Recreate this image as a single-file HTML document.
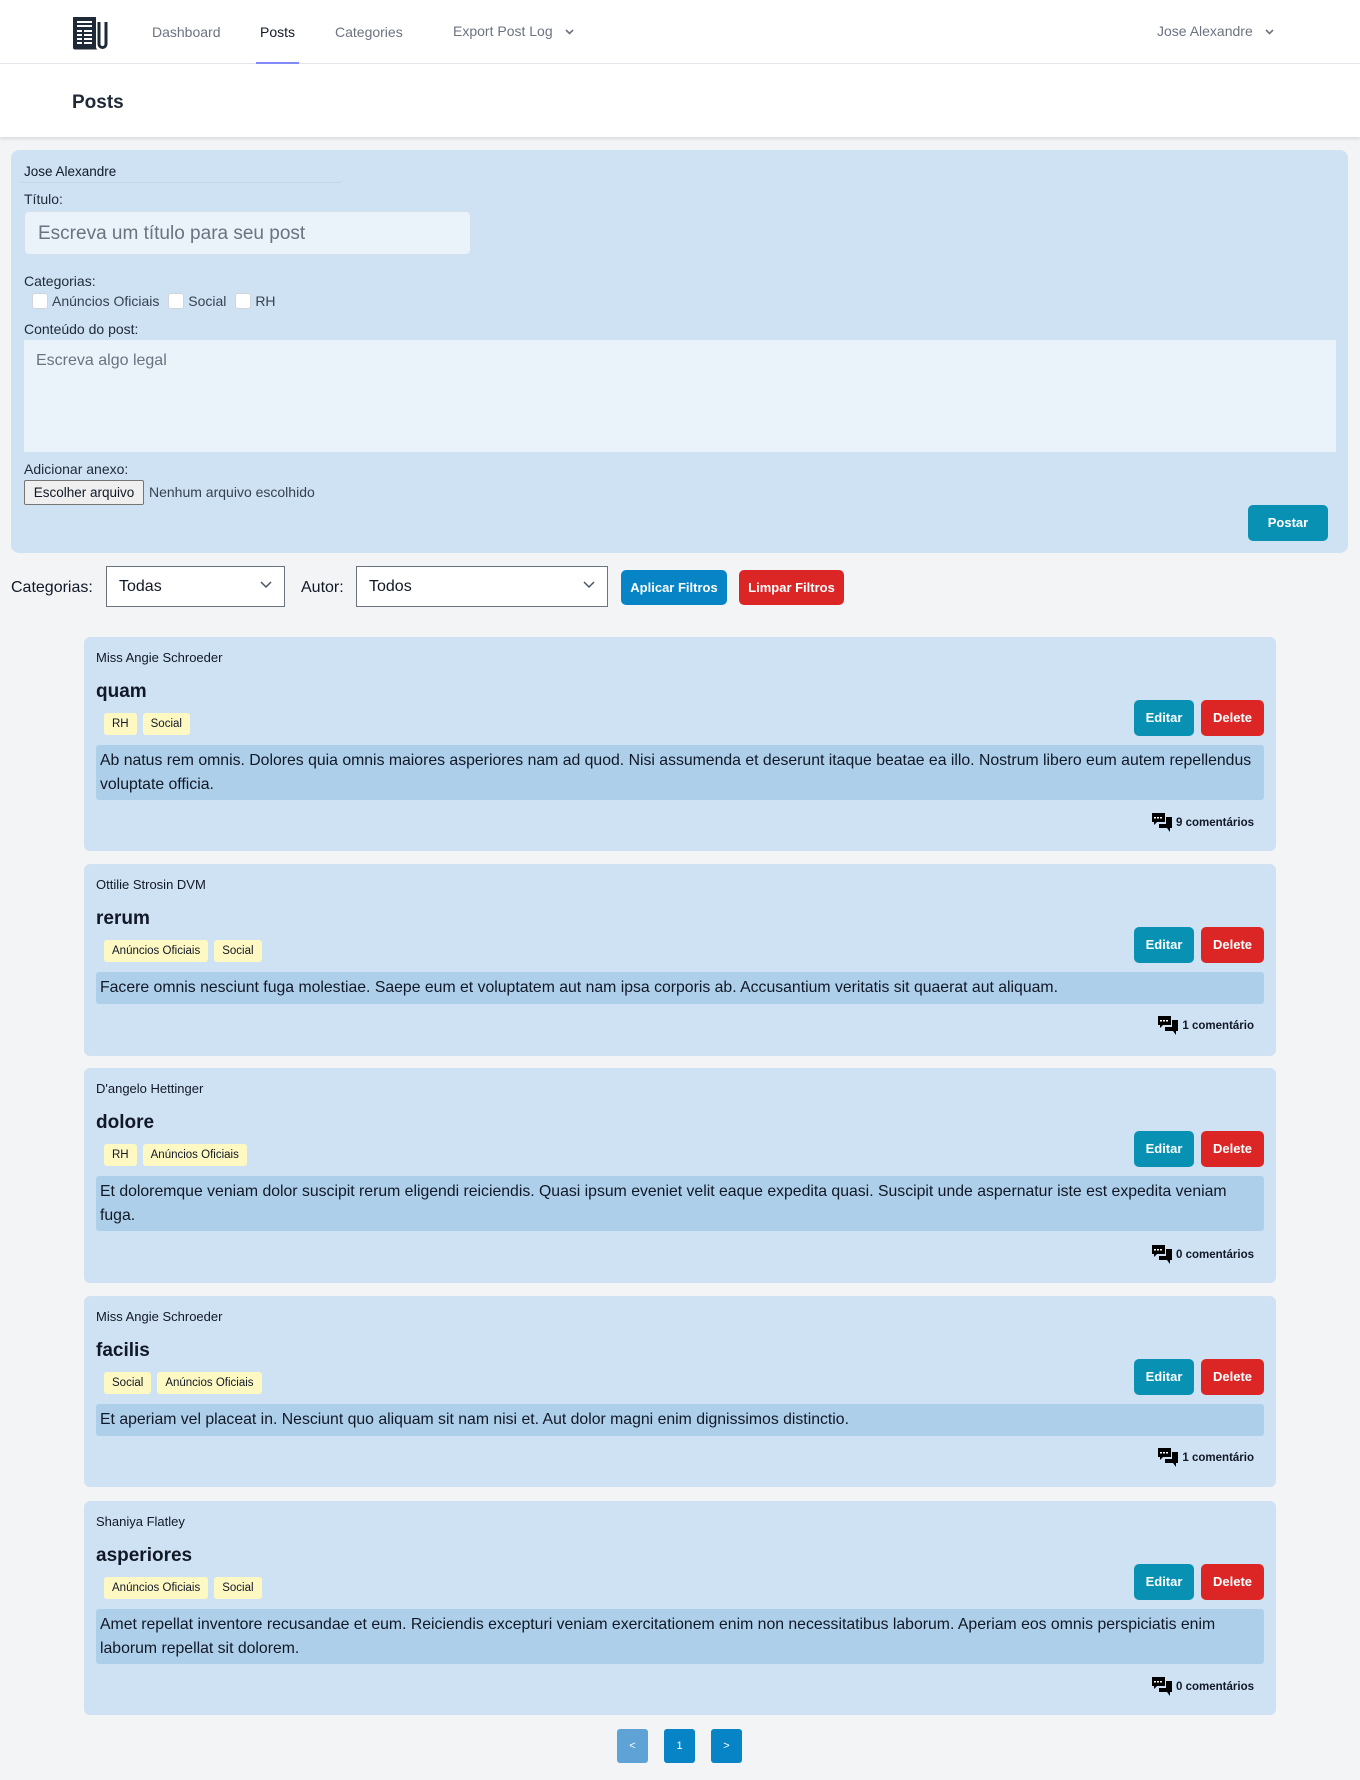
<!DOCTYPE html>
<html><head><meta charset="utf-8"><style>
*{box-sizing:border-box;margin:0;padding:0}
body{width:1360px;height:1780px;background:#f3f4f6;font-family:"Liberation Sans",sans-serif;color:#111827;position:relative;overflow:hidden}
.abs{position:absolute}
.nav{left:0;top:0;width:1360px;height:64px;background:#fff;border-bottom:1px solid #e5e7eb}
.nl{position:absolute;top:24px;font-size:14px;color:#6b7280;white-space:nowrap}
.hdr{left:0;top:64px;width:1360px;height:73px;background:#fff;box-shadow:0 2px 3px rgba(0,0,0,.1)}
.panel{left:11px;top:150px;width:1337px;height:403px;background:#cfe2f3;border-radius:8px}
.lbl{position:absolute;font-size:14px;color:#1f2937}
.cb{display:inline-block;width:16px;height:16px;background:#fff;border:1px solid #d1d5db;border-radius:3px;vertical-align:-3px;margin-right:4px}
.sel{position:absolute;height:41px;background:#fff;border:1px solid #6b7280;font-size:16px;padding:11px 12px}
.sel svg{position:absolute;right:12px;top:14px}
.btn{position:absolute;color:#fff;font-size:13px;font-weight:bold;border-radius:5px;text-align:center}
.card{position:absolute;left:84px;width:1192px;background:#cfe2f3;border-radius:6px}
.card .au{position:absolute;left:12px;top:13px;font-size:13px}
.card .ti{position:absolute;left:12px;top:44px;font-size:19px;font-weight:bold}
.card .tags{position:absolute;left:20px;top:76px}
.tag{display:inline-block;background:#fef9c3;font-size:11.5px;padding:0 8px;height:22px;line-height:22px;border-radius:3px;margin-right:6px}
.card .bd{position:absolute;left:12px;right:12px;top:108px;background:#aecfe9;border-radius:3px;padding:4px 4px;font-size:15.8px;line-height:24px}
.card .ed{left:1050px;top:63px;width:60px;height:36px;line-height:36px;background:#0891b2}
.card .de{left:1117px;top:63px;width:63px;height:36px;line-height:36px;background:#dc2626}
.card .cm{position:absolute;right:22px;font-size:11.5px;font-weight:bold;display:flex;align-items:center;gap:4px}
.pg{position:absolute;top:1729px;width:31px;height:34px;line-height:34px;color:#fff;font-size:11px;text-align:center;border-radius:3px}
</style></head><body>
<div class="abs nav">
<svg class="abs" style="left:72px;top:16px" width="38" height="34" viewBox="0 0 38 34"><path d="M1 1h23v30c0 1.5 1 2.5 2 2.5H3c-1.2 0-2-.8-2-2z" fill="#1f2937"/><path d="M27 6v22a3.5 3.5 0 0 0 7 0V6" fill="none" stroke="#1f2937" stroke-width="3"/><g fill="#fff"><rect x="5" y="5" width="15" height="2"/><rect x="5" y="9" width="15" height="2"/><rect x="5" y="14" width="5" height="2"/><rect x="12" y="14" width="8" height="2"/><rect x="5" y="18" width="5" height="2"/><rect x="12" y="18" width="8" height="2"/><rect x="5" y="22" width="5" height="2"/><rect x="12" y="22" width="8" height="2"/><rect x="5" y="26" width="5" height="2"/><rect x="12" y="26" width="8" height="2"/></g></svg>
<span class="nl" style="left:152px">Dashboard</span>
<span class="nl" style="left:260px;color:#111827">Posts</span>
<div class="abs" style="left:256px;top:62px;width:43px;height:2px;background:#818cf8"></div>
<span class="nl" style="left:335px">Categories</span>
<span class="nl" style="left:453px;top:23px">Export Post Log</span>
<svg class="abs" style="left:565px;top:29px" width="9" height="6" viewBox="0 0 9 6"><path d="M1 1l3.5 3.5L8 1" fill="none" stroke="#6b7280" stroke-width="1.6"/></svg>
<span class="nl" style="left:1157px;top:23px">Jose Alexandre</span>
<svg class="abs" style="left:1265px;top:29px" width="9" height="6" viewBox="0 0 9 6"><path d="M1 1l3.5 3.5L8 1" fill="none" stroke="#6b7280" stroke-width="1.6"/></svg>
</div>
<div class="abs hdr"><div class="abs" style="left:72px;top:28px;font-size:19px;font-weight:bold;color:#1f2937">Posts</div></div>

<div class="abs panel">
<div class="abs" style="left:8px;top:10px;width:324px;height:23px;border-bottom:1px solid #c2d6e8;border-radius:4px;font-size:13.5px;padding-left:5px;padding-top:4px">Jose Alexandre</div>
<div class="lbl" style="left:13px;top:41px">Título:</div>
<div class="abs" style="left:13px;top:61px;width:447px;height:44px;background:#eaf2fa;border:1px solid #d4e0ec;border-radius:5px;font-size:19px;color:#6b7280;padding:11px 13px">Escreva um título para seu post</div>
<div class="lbl" style="left:13px;top:123px">Categorias:</div>
<div class="lbl" style="left:21px;top:143px;color:#374151"><span class="cb"></span>Anúncios Oficiais <span class="cb" style="margin-left:5px"></span>Social <span class="cb" style="margin-left:5px"></span>RH</div>
<div class="lbl" style="left:13px;top:171px">Conteúdo do post:</div>
<div class="abs" style="left:13px;top:190px;width:1312px;height:112px;background:#eaf2fa;font-size:16px;color:#6b7280;padding:12px 12px">Escreva algo legal</div>
<div class="lbl" style="left:13px;top:311px">Adicionar anexo:</div>
<div class="abs" style="left:13px;top:330px;width:120px;height:25px;background:#efefef;border:1px solid #767676;border-radius:2px;font-size:13.5px;text-align:center;line-height:23px">Escolher arquivo</div>
<div class="lbl" style="left:138px;top:334px;color:#374151">Nenhum arquivo escolhido</div>
<div class="btn" style="left:1237px;top:355px;width:80px;height:36px;line-height:36px;background:#0891b2">Postar</div>
</div>

<div class="abs" style="left:11px;top:579px;font-size:16px">Categorias:</div>
<div class="sel" style="left:106px;top:566px;width:179px">Todas<svg width="12" height="8" viewBox="0 0 12 8"><path d="M1 1l5 5 5-5" fill="none" stroke="#4b5563" stroke-width="1.5"/></svg></div>
<div class="abs" style="left:301px;top:579px;font-size:16px">Autor:</div>
<div class="sel" style="left:356px;top:566px;width:252px">Todos<svg width="12" height="8" viewBox="0 0 12 8"><path d="M1 1l5 5 5-5" fill="none" stroke="#4b5563" stroke-width="1.5"/></svg></div>
<div class="btn" style="left:621px;top:570px;width:106px;height:35px;line-height:35px;background:#0784c6">Aplicar Filtros</div>
<div class="btn" style="left:739px;top:570px;width:105px;height:35px;line-height:35px;background:#dc2626">Limpar Filtros</div>

<div class="card" style="top:637px;height:214px">
<div class="au">Miss Angie Schroeder</div><div class="ti">quam</div>
<div class="tags"><span class="tag">RH</span><span class="tag">Social</span></div>
<div class="btn ed">Editar</div><div class="btn de">Delete</div>
<div class="bd" style="height:55px">Ab natus rem omnis. Dolores quia omnis maiores asperiores nam ad quod. Nisi assumenda et deserunt itaque beatae ea illo. Nostrum libero eum autem repellendus voluptate officia.</div>
<div class="cm" style="top:176px"><svg width="20" height="20" viewBox="0 0 20 20"><path d="M0 0h13v9H5l-3 3V9H0z" fill="#000"/><path d="M14 4h6v11h-2v4l-3-4H7v-4h7z" fill="#000"/><g fill="#fff"><rect x="2" y="4" width="2" height="1.5"/><rect x="5" y="4" width="2" height="1.5"/><rect x="8" y="4" width="2" height="1.5"/></g></svg>9 comentários</div>
</div>

<div class="card" style="top:864px;height:192px">
<div class="au">Ottilie Strosin DVM</div><div class="ti">rerum</div>
<div class="tags"><span class="tag">Anúncios Oficiais</span><span class="tag">Social</span></div>
<div class="btn ed">Editar</div><div class="btn de">Delete</div>
<div class="bd" style="height:32px">Facere omnis nesciunt fuga molestiae. Saepe eum et voluptatem aut nam ipsa corporis ab. Accusantium veritatis sit quaerat aut aliquam.</div>
<div class="cm" style="top:152px"><svg width="20" height="20" viewBox="0 0 20 20"><path d="M0 0h13v9H5l-3 3V9H0z" fill="#000"/><path d="M14 4h6v11h-2v4l-3-4H7v-4h7z" fill="#000"/><g fill="#fff"><rect x="2" y="4" width="2" height="1.5"/><rect x="5" y="4" width="2" height="1.5"/><rect x="8" y="4" width="2" height="1.5"/></g></svg>1 comentário</div>
</div>

<div class="card" style="top:1068px;height:215px">
<div class="au">D'angelo Hettinger</div><div class="ti">dolore</div>
<div class="tags"><span class="tag">RH</span><span class="tag">Anúncios Oficiais</span></div>
<div class="btn ed">Editar</div><div class="btn de">Delete</div>
<div class="bd" style="height:55px">Et doloremque veniam dolor suscipit rerum eligendi reiciendis. Quasi ipsum eveniet velit eaque expedita quasi. Suscipit unde aspernatur iste est expedita veniam fuga.</div>
<div class="cm" style="top:177px"><svg width="20" height="20" viewBox="0 0 20 20"><path d="M0 0h13v9H5l-3 3V9H0z" fill="#000"/><path d="M14 4h6v11h-2v4l-3-4H7v-4h7z" fill="#000"/><g fill="#fff"><rect x="2" y="4" width="2" height="1.5"/><rect x="5" y="4" width="2" height="1.5"/><rect x="8" y="4" width="2" height="1.5"/></g></svg>0 comentários</div>
</div>

<div class="card" style="top:1296px;height:191px">
<div class="au">Miss Angie Schroeder</div><div class="ti">facilis</div>
<div class="tags"><span class="tag">Social</span><span class="tag">Anúncios Oficiais</span></div>
<div class="btn ed">Editar</div><div class="btn de">Delete</div>
<div class="bd" style="height:32px">Et aperiam vel placeat in. Nesciunt quo aliquam sit nam nisi et. Aut dolor magni enim dignissimos distinctio.</div>
<div class="cm" style="top:152px"><svg width="20" height="20" viewBox="0 0 20 20"><path d="M0 0h13v9H5l-3 3V9H0z" fill="#000"/><path d="M14 4h6v11h-2v4l-3-4H7v-4h7z" fill="#000"/><g fill="#fff"><rect x="2" y="4" width="2" height="1.5"/><rect x="5" y="4" width="2" height="1.5"/><rect x="8" y="4" width="2" height="1.5"/></g></svg>1 comentário</div>
</div>

<div class="card" style="top:1501px;height:214px">
<div class="au">Shaniya Flatley</div><div class="ti">asperiores</div>
<div class="tags"><span class="tag">Anúncios Oficiais</span><span class="tag">Social</span></div>
<div class="btn ed">Editar</div><div class="btn de">Delete</div>
<div class="bd" style="height:55px">Amet repellat inventore recusandae et eum. Reiciendis excepturi veniam exercitationem enim non necessitatibus laborum. Aperiam eos omnis perspiciatis enim laborum repellat sit dolorem.</div>
<div class="cm" style="top:176px"><svg width="20" height="20" viewBox="0 0 20 20"><path d="M0 0h13v9H5l-3 3V9H0z" fill="#000"/><path d="M14 4h6v11h-2v4l-3-4H7v-4h7z" fill="#000"/><g fill="#fff"><rect x="2" y="4" width="2" height="1.5"/><rect x="5" y="4" width="2" height="1.5"/><rect x="8" y="4" width="2" height="1.5"/></g></svg>0 comentários</div>
</div>

<div class="pg" style="left:617px;background:#5fa3d6">&lt;</div>
<div class="pg" style="left:664px;background:#0784c6">1</div>
<div class="pg" style="left:711px;background:#0784c6">&gt;</div>
</body></html>
